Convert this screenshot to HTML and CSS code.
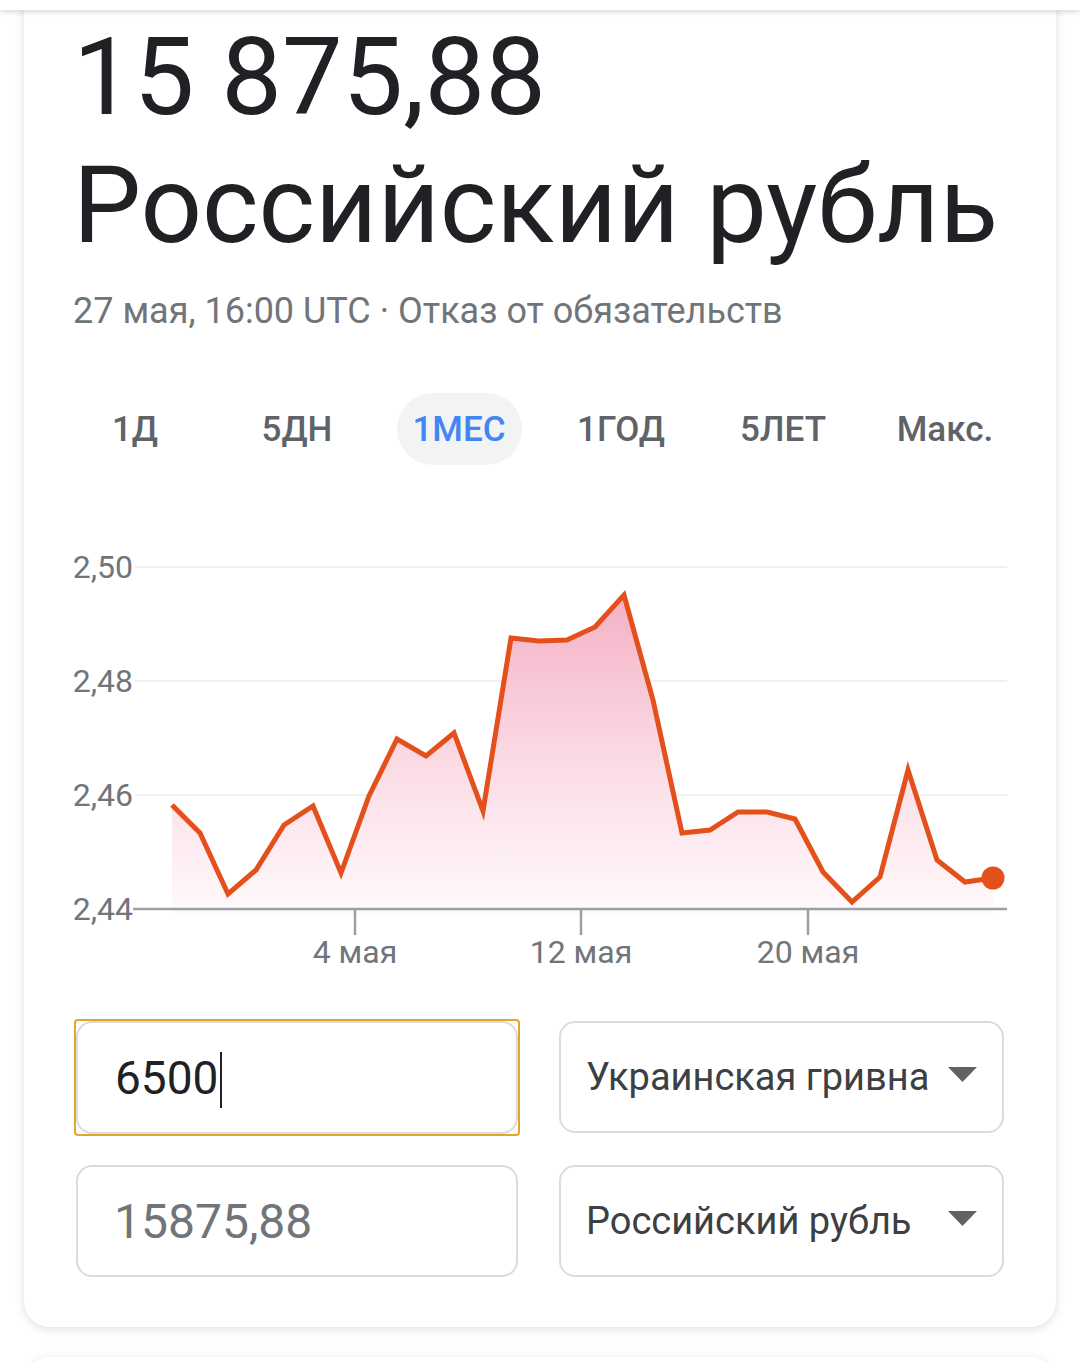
FILE: index.html
```html
<!DOCTYPE html>
<html lang="ru">
<head>
<meta charset="utf-8">
<title>Конвертер валют</title>
<link rel="stylesheet" href="styles.css">
</head>
<body>
<div class="topbar"></div>
<main class="card">
  <h1 class="headline">
    <span class="amount">15 875,88</span>
    <span class="currency">Российский рубль</span>
  </h1>
  <p class="meta">27 мая, 16:00 UTC · Отказ от обязательств</p>
  <nav class="tabs">
    <span class="tab">1Д</span>
    <span class="tab">5ДН</span>
    <span class="tab active">1МЕС</span>
    <span class="tab">1ГОД</span>
    <span class="tab">5ЛЕТ</span>
    <span class="tab">Макс.</span>
  </nav>
  <div class="chart">
    <svg width="960" height="440" viewBox="0 0 960 440">
      <defs>
        <linearGradient id="fillGrad" gradientUnits="userSpaceOnUse" x1="0" y1="55" x2="0" y2="375">
          <stop offset="0" stop-color="#f5b1c6"/>
          <stop offset="0.55" stop-color="#fbdde6"/>
          <stop offset="1" stop-color="#fffafb"/>
        </linearGradient>
      </defs>
      <g class="grid">
        <line x1="75" y1="27" x2="947" y2="27"/>
        <line x1="75" y1="141" x2="947" y2="141"/>
        <line x1="75" y1="255" x2="947" y2="255"/>
      </g>
      <polygon class="area" points="112,375 112,265 140,293 168,354 196,330 224,285 253,266 281,333 309,256 337,199 366,216 394,193 423,271 451,98 479,101 507,100 535,87 564,55 593,160 622,293 650,290 678,272 707,272 735,279 763,332 792,362 820,337 848,230 877,320 905,342 933,338 933,375"/>
      <g class="axis">
        <line x1="73" y1="369" x2="947" y2="369"/>
        <line x1="295" y1="369" x2="295" y2="395"/>
        <line x1="521" y1="369" x2="521" y2="395"/>
        <line x1="748" y1="369" x2="748" y2="395"/>
      </g>
      <polyline class="line" points="112,265 140,293 168,354 196,330 224,285 253,266 281,333 309,256 337,199 366,216 394,193 423,271 451,98 479,101 507,100 535,87 564,55 593,160 622,293 650,290 678,272 707,272 735,279 763,332 792,362 820,337 848,230 877,320 905,342 933,338"/>
      <circle class="dot" cx="933" cy="338" r="11.5"/>
      <g class="ylabels">
        <text x="73" y="38">2,50</text>
        <text x="73" y="152">2,48</text>
        <text x="73" y="266">2,46</text>
        <text x="73" y="380">2,44</text>
      </g>
      <g class="xlabels">
        <text x="295" y="423">4 мая</text>
        <text x="521" y="423">12 мая</text>
        <text x="748" y="423">20 мая</text>
      </g>
    </svg>
  </div>
  <div class="converter">
    <div class="focus-ring">
      <div class="field">
        <span class="field-value">6500</span><span class="caret"></span>
      </div>
    </div>
    <div class="select">
      <span class="select-label">Украинская гривна</span>
      <svg class="arrow" width="29" height="15" viewBox="0 0 29 15"><polygon points="0,0 29,0 14.5,15"/></svg>
    </div>
    <div class="field muted-field">
      <span class="field-value muted">15875,88</span>
    </div>
    <div class="select">
      <span class="select-label">Российский рубль</span>
      <svg class="arrow" width="29" height="15" viewBox="0 0 29 15"><polygon points="0,0 29,0 14.5,15"/></svg>
    </div>
  </div>
</main>
<div class="card next"></div>
</body>
</html>
```
FILE: styles.css
```css
* { box-sizing: border-box; }

html, body {
  margin: 0;
  padding: 0;
  background: #ffffff;
  font-family: Roboto, "Noto Sans", "Liberation Sans", sans-serif;
  color: #202124;
  overflow: hidden;
}

body {
  position: relative;
  height: 1362px;
}

.topbar {
  position: absolute;
  top: 0;
  left: 0;
  right: 0;
  height: 10px;
  background: #ffffff;
  box-shadow: 0 2px 6px rgba(0, 0, 0, 0.16);
  z-index: 2;
}

.card {
  margin: 0 24px;
  background: #ffffff;
  border-radius: 0 0 26px 26px;
  box-shadow: 0 2px 10px rgba(0, 0, 0, 0.13);
  padding: 13px 0 50px 0;
}

.card.next {
  margin-top: 30px;
  height: 60px;
  border-radius: 26px 26px 0 0;
  padding: 0;
}

.headline {
  margin: 0 0 0 49px;
  font-weight: 400;
  font-size: 108px;
  line-height: 128px;
  color: #202124;
}

.amount, .currency {
  display: block;
  white-space: nowrap;
}

.meta {
  margin: 21px 0 0 49px;
  font-size: 36px;
  line-height: 42px;
  color: #70757a;
  white-space: nowrap;
}

.tabs {
  margin: 61px 30px 0 30px;
  display: grid;
  grid-template-columns: repeat(6, 162px);
}

.tab {
  justify-self: center;
  width: 125px;
  height: 72px;
  border-radius: 36px;
  display: flex;
  align-items: center;
  justify-content: center;
  font-size: 35px;
  font-weight: 500;
  color: #5f6368;
  white-space: nowrap;
}

.tab.active {
  background: #f1f3f4;
  color: #4285f4;
}

.chart {
  margin: 75px 0 0 36px;
  height: 440px;
}

.chart svg {
  display: block;
}

.grid line {
  stroke: #f1f1f1;
  stroke-width: 2;
}

.axis line {
  stroke: #9aa0a6;
  stroke-width: 2.5;
}

.area {
  fill: url(#fillGrad);
}

.line {
  fill: none;
  stroke: #e4501c;
  stroke-width: 5;
  stroke-linejoin: miter;
  stroke-miterlimit: 10;
}

.dot {
  fill: #e4501c;
}

.ylabels text {
  font-family: Roboto, "Noto Sans", sans-serif;
  font-size: 32px;
  fill: #70757a;
  text-anchor: end;
}

.xlabels text {
  font-family: Roboto, "Noto Sans", sans-serif;
  font-size: 32px;
  fill: #70757a;
  text-anchor: middle;
}

.converter {
  margin: 41px 0 0 52px;
  display: grid;
  grid-template-columns: 442px 445px;
  column-gap: 41px;
  row-gap: 31px;
}

.focus-ring {
  margin: -2px;
  border: 2.5px solid #e5a42a;
  border-radius: 4px;
}

.field {
  height: 112px;
  border: 2px solid #dadce0;
  border-radius: 16px;
  display: flex;
  align-items: center;
  padding-left: 37px;
  background: #ffffff;
}

.focus-ring .field {
  height: 113px;
}

.muted-field {
  padding-left: 36px;
}

.field-value {
  font-size: 46px;
  color: #202124;
  white-space: nowrap;
}

.field-value.muted {
  font-size: 48px;
  color: #70757a;
}

.caret {
  display: block;
  width: 2px;
  height: 56px;
  background: #202124;
  margin-left: 2px;
  margin-top: 4px;
}

.select {
  height: 112px;
  border: 2px solid #dadce0;
  border-radius: 16px;
  display: flex;
  align-items: center;
  justify-content: space-between;
  padding: 0 25px 0 25px;
  background: #ffffff;
}

.select-label {
  font-size: 38px;
  color: #3c4043;
  white-space: nowrap;
}

.arrow {
  display: block;
  margin-top: -6px;
}

.arrow polygon {
  fill: #5f6368;
}
```
